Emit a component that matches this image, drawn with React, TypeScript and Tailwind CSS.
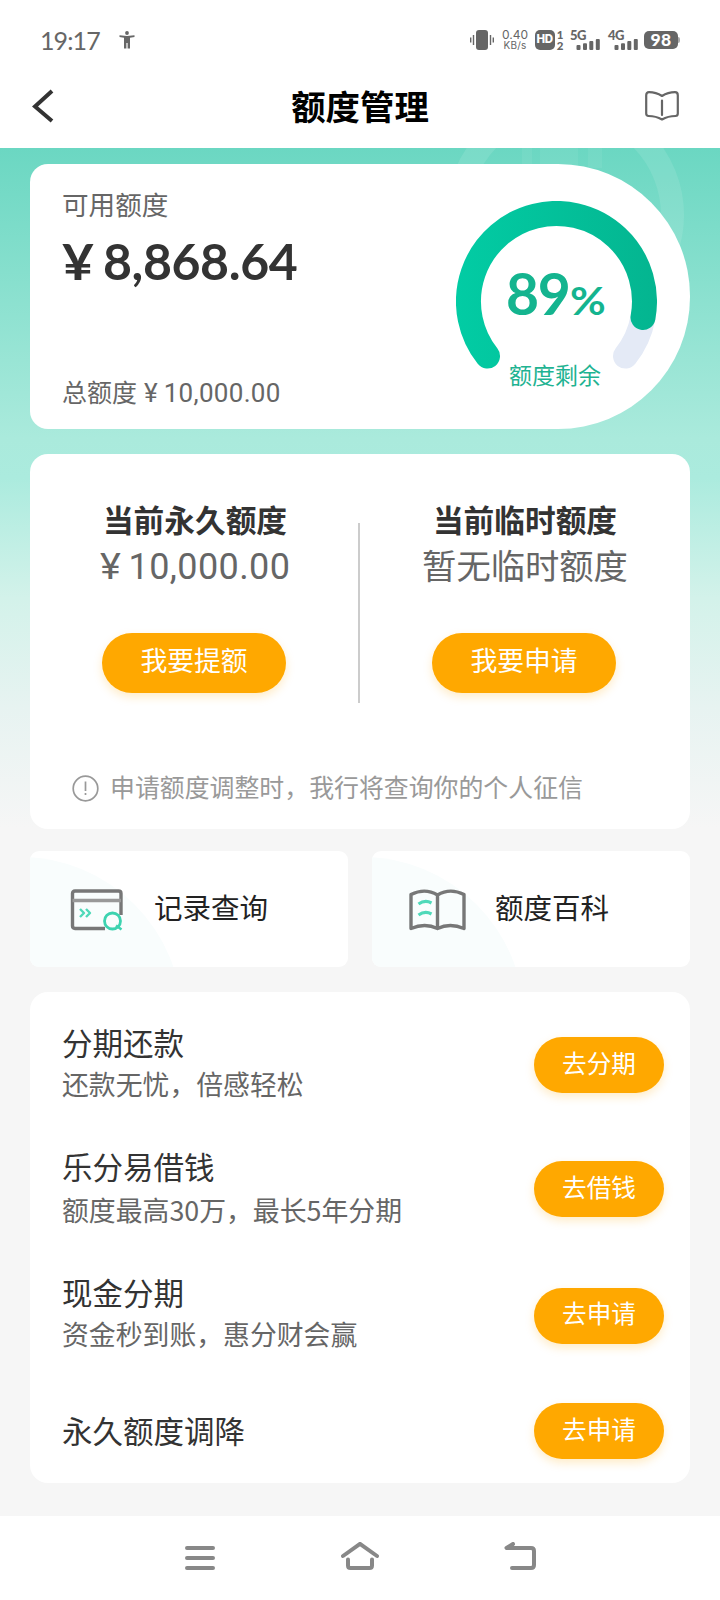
import React from 'react';

interface PlanItem {
  title: string;
  desc?: string;
  action: string;
  rowClass: string;
  textClass: string;
}

const PLANS: PlanItem[] = [
  { title: '分期还款', desc: '还款无忧，倍感轻松', action: '去分期', rowClass: 'h-[124px]', textClass: 'pb-[5px]' },
  { title: '乐分易借钱', desc: '额度最高30万，最长5年分期', action: '去借钱', rowClass: 'h-[124px]', textClass: 'pb-[3px] space-y-[2px]' },
  { title: '现金分期', desc: '资金秒到账，惠分财会赢', action: '去申请', rowClass: 'h-[129px]', textClass: 'pb-[5px]' },
  { title: '永久额度调降', action: '去申请', rowClass: 'h-[102px]', textClass: 'pb-[2px]' },
];

const StatusBar: React.FC = () => (
  <div className="flex h-20 items-center justify-between pl-10 pr-[40px] text-[#666]">
    <div className="flex items-center">
      <span className="w-[61px] whitespace-nowrap font-['Lato','Noto_Sans_CJK_SC',sans-serif] text-[25px] leading-8 tracking-[-0.9px]">19:17</span>
      <svg className="ml-[18px]" width="16" height="18" viewBox="0 0 16 18" fill="#666">
        <circle cx="8" cy="2" r="1.9" />
        <path d="M.5 4.2 8 5l7.5-.8v1.7L11 6.8V17.5H8.600V12H7.400V17.5H5V6.8L.5 5.9z" />
      </svg>
    </div>
    <div className="flex items-center">
      <svg width="24" height="20" viewBox="0 0 24 20" fill="#666">
        <rect x="6" y="0" width="12" height="20" rx="3" />
        <path d="M3.5 5v10M.7 7.5v5M20.5 5v10M23.3 7.5v5" stroke="#666" strokeWidth="1.400" />
      </svg>
      <div className="ml-2 flex w-[27px] flex-col items-center font-['Inter',sans-serif] text-[12px] leading-[11px]">
        <span>0.40</span>
        <span className="text-[10px] tracking-[0.2px]">KB/s</span>
      </div>
      <div className="ml-[6px] flex h-5 w-[20px] items-center justify-center rounded-[5px] bg-[#666] font-['Inter',sans-serif] text-[11.5px] font-extrabold tracking-[-0.4px] text-white">HD</div>
      <div className="ml-[1.500px] flex w-[8px] flex-col items-center font-['Lato',sans-serif] text-[11.5px] font-black leading-[11px]">
        <span>1</span>
        <span>2</span>
      </div>
      <Signal label="5G" className="ml-[6px]" />
      <Signal label="4G" className="ml-[8px]" />
      <div className="ml-[6px] flex items-center">
        <span className="flex h-[18px] w-[34px] items-center justify-center rounded-[5px] bg-[#666] font-['Lato',sans-serif] text-[17.5px] font-black leading-none tracking-[0.3px] text-white">98</span>
        <span className="h-[6px] w-[2px] rounded-r bg-[#aaa]" />
      </div>
    </div>
  </div>
);

const Signal: React.FC<{ label: string; className: string }> = ({ label, className }) => (
  <div className={`relative h-5 w-[30px] ${className}`}>
    <span className="absolute -top-px left-0 font-['Lato',sans-serif] text-[13px] font-black leading-3 tracking-[-0.5px]">{label}</span>
    <svg className="absolute inset-0" width="30" height="20" viewBox="0 0 30 20" fill="#666">
      <rect x="6.500" y="15" width="4" height="5" rx="1" />
      <rect x="13" y="13.200" width="4" height="6.800" rx="1" />
      <rect x="19.300" y="11" width="4" height="9" rx="1" />
      <rect x="25.800" y="9" width="4" height="11" rx="1" />
    </svg>
  </div>
);

const Header: React.FC = () => (
  <div className="flex h-[68px] items-center justify-between pb-[16px] pl-8 pr-[41px]">
    <svg width="22" height="34" viewBox="0 0 22 34" fill="none" stroke="#333" strokeWidth="4">
      <path d="M20 2 3 17.5 20 32" />
    </svg>
    <h1 className="pb-[2px] pl-[21px] text-[34.4px] font-bold leading-10 text-black">额度管理</h1>
    <svg width="34" height="30" viewBox="0 0 34 30" fill="none" stroke="#666" strokeWidth="2.200" strokeLinejoin="round" strokeLinecap="round">
      <path d="M1.2 4.2Q1.2 1.200 4 1.200 11 1.200 17 5 23 1.200 30 1.200 32.8 1.200 32.8 4.200V22.500Q32.8 25 30.500 25 23 25 17 28.500 11 25 3.500 25 1.200 25 1.200 22.500zM17 9.500V24" />
    </svg>
  </div>
);

const Gauge: React.FC = () => (
  <div className="relative h-[201px] w-[201px]">
    <svg width="201" height="201" viewBox="-100.5 -100.5 201 201" fill="none" strokeWidth="25" strokeLinecap="round">
      <defs>
        <linearGradient id="gauge" x1="-100" y1="0" x2="100" y2="0" gradientUnits="userSpaceOnUse">
          <stop offset="0" stopColor="#02cca4" />
          <stop offset="1" stopColor="#04b590" />
        </linearGradient>
      </defs>
      <path d="M86.500 16A88 88 0 0 1 69 54.600" stroke="#e4eaf6" />
      <path d="M-69 54.600A88 88 0 1 1 86.500 16" stroke="url(#gauge)" />
    </svg>
    <div className="absolute left-[50px] top-[62px] flex items-baseline font-['Lato',sans-serif] font-bold leading-[60px] text-[#14b48f]">
      <span className="text-[57px] tracking-[-1.2px]">89</span>
      <span className="origin-left scale-x-[1.12] text-[39px]">%</span>
    </div>
    <p className="absolute inset-x-0 top-[157px] pr-[3px] text-center text-[23px] leading-8 text-[#1fb392]">额度剩余</p>
  </div>
);

const SummaryCard: React.FC = () => (
  <section className="flex h-[265.5px] justify-between rounded-l-[18px] rounded-r-[132px] bg-white pl-8 pr-[33px] pt-[24px]">
    <div className="flex flex-col whitespace-nowrap">
      <p className="text-[26.6px] leading-8 text-[#666]">可用额度</p>
      <p className="mt-[16px] flex items-baseline font-['Lato','Noto_Sans_CJK_SC',sans-serif] text-[50px] font-bold leading-[50px] text-[#333]">
        <span className="origin-left scale-x-110">¥</span>
        <span className="ml-3 tracking-[-0.4px]">8,868.64</span>
      </p>
      <p className="mt-[89.5px] flex items-baseline text-[25px] leading-8 text-[#666]">
        总额度
        <span className="ml-[7px] font-['Roboto',sans-serif] text-[26px]">¥</span>
        <span className="ml-[6px] font-['Roboto',sans-serif] text-[26px] tracking-[0.3px]">10,000.00</span>
      </p>
    </div>
    <div className="pt-[13px]">
      <Gauge />
    </div>
  </section>
);

const LimitColumn: React.FC<{ title: string; action: string; children: React.ReactNode }> = ({ title, action, children }) => (
  <div className="flex flex-1 flex-col items-center">
    <h2 className="pl-[2px] text-[30.7px] font-bold leading-10 text-[#333]">{title}</h2>
    <p className="mt-[6px] flex h-10 whitespace-nowrap pl-[2px] text-[#666]">{children}</p>
    <button className="mt-[48.5px] h-[60px] w-[184px] rounded-full bg-[#ffa800] pb-[7px] text-[26.8px] leading-[53px] text-white shadow-[0_4px_10px_rgba(255,168,0,0.22)]">
      {action}
    </button>
  </div>
);

const LimitCard: React.FC = () => (
  <section className="mt-[24.5px] h-[375px] rounded-[18px] bg-white pt-[45px]">
    <div className="flex pr-[2px]">
      <LimitColumn title="当前永久额度" action="我要提额">
        <span className="origin-left scale-x-110 pt-[2px] font-['Roboto',sans-serif] text-[36px] leading-10">¥</span>
        <span className="ml-[10px] pt-[2px] font-['Roboto',sans-serif] text-[36px] leading-10 tracking-[0.4px]">10,000.00</span>
      </LimitColumn>
      <div className="mt-[24px] h-[180px] w-[2px] bg-[#ccc]" />
      <LimitColumn title="当前临时额度" action="我要申请">
        <span className="-mt-px text-[34.3px] leading-10">暂无临时额度</span>
      </LimitColumn>
    </div>
    <div className="mt-[67px] flex items-center pl-[42px] text-[#999]">
      <svg width="27" height="27" viewBox="0 0 27 27" fill="none" stroke="#999" strokeWidth="1.700">
        <circle cx="13.500" cy="13.500" r="12.300" />
        <path d="M13.500 6.500v9.500M13.500 18v2" />
      </svg>
      <span className="ml-[11px] pb-1.5 text-[24.9px] leading-8">申请额度调整时，我行将查询你的个人征信</span>
    </div>
  </section>
);

const TileGlow: React.FC = () => (
  <svg className="absolute inset-0" width="318" height="116" viewBox="0 0 318 116">
    <circle cx="-10" cy="168" r="162" fill="#f9fdfd" />
  </svg>
);

const Tiles: React.FC = () => (
  <div className="mt-[22px] flex gap-6 text-[28.5px] text-[#222]">
    <div className="relative flex h-[116px] w-[318px] items-center overflow-hidden rounded-[9px] bg-white pl-10">
      <TileGlow />
      <svg className="relative mt-[2px]" width="54" height="42" viewBox="0 0 54 42" fill="none" stroke="#777" strokeWidth="3.400" strokeLinejoin="round">
        <path d="M35 39.500H5Q2.500 39.500 2.500 37V4.500Q2.500 2 5 2H48.500Q51 2 51 4.500V26" />
        <path d="M2.500 11.500H51" stroke="#999" />
        <path d="m10 20 4 4-4 4M16 20l4 4-4 4" stroke="#4fd9b9" strokeWidth="2.400" />
        <circle cx="42.500" cy="32" r="8" stroke="#3dd3b0" strokeWidth="2.800" />
        <path d="m46 36.500 5.500 4" stroke="#3dd3b0" strokeWidth="2.500" />
      </svg>
      <span className="relative ml-[30px] pb-[3px]">记录查询</span>
    </div>
    <div className="relative flex h-[116px] w-[318px] items-center overflow-hidden rounded-[9px] bg-white pl-[37px]">
      <TileGlow />
      <svg className="relative mt-[2px]" width="57" height="42" viewBox="0 0 57 42" fill="none" stroke="#777" strokeWidth="3.400" strokeLinejoin="round">
        <path d="M28.500 6Q16-1.500 2 5.500V39.500Q16 33.500 28.500 39.500 41 33.500 55 39.500V5.500Q41-1.500 28.500 6V39" />
        <path d="M9.500 15Q16 10.500 22.500 14M9.500 26Q16 21.500 22.500 25" stroke="#4fd9b9" strokeWidth="3.200" />
      </svg>
      <span className="relative ml-[29px] pb-[3px]">额度百科</span>
    </div>
  </div>
);

const PlanList: React.FC = () => (
  <section className="mt-[25px] h-[491px] rounded-[18px] bg-white pl-8 pr-[26px] pt-[11.5px]">
    {PLANS.map((item) => (
      <div key={item.title} className={`flex items-center justify-between ${item.rowClass}`}>
        <div className={`whitespace-nowrap ${item.textClass}`}>
          <p className="text-[30.5px] leading-[42px] text-[#333]">{item.title}</p>
          {item.desc && <p className="text-[26.85px] leading-[42px] text-[#666]">{item.desc}</p>}
        </div>
        <button className="h-14 w-[130px] rounded-full bg-[#ffa800] pb-1.5 text-[24.6px] leading-[49px] text-white shadow-[0_4px_10px_rgba(255,168,0,0.22)]">
          {item.action}
        </button>
      </div>
    ))}
  </section>
);

const NavBar: React.FC = () => (
  <nav className="flex h-[84px] items-center justify-between bg-white pl-[184px] pr-[182px]">
    <svg width="32" height="32" viewBox="0 0 32 32" stroke="#888" strokeWidth="4" strokeLinecap="round">
      <path d="M3 6h26M3 16h26M3 26h26" />
    </svg>
    <svg width="40" height="32" viewBox="0 0 40 32" fill="none" stroke="#888" strokeWidth="4" strokeLinecap="round" strokeLinejoin="round">
      <path d="M3 14 20 1.800 37 14" />
      <path d="M8 17.500V23.500Q8 26 10.500 26H29.500Q32 26 32 23.500V17.500" />
    </svg>
    <svg width="34" height="32" viewBox="0 0 34 32" fill="none" stroke="#888" strokeWidth="4" strokeLinecap="round" strokeLinejoin="round">
      <path d="M9 2 2.500 6H27Q30 6 30 9V23Q30 26 27 26H8" />
    </svg>
  </nav>
);

const App: React.FC = () => {
  return (
    <div className="h-[1600px] w-[720px] overflow-hidden bg-white font-['Noto_Sans_CJK_SC',sans-serif]">
      <StatusBar />
      <Header />
      <main className="relative h-[1368px] bg-[#f6f6f6] bg-linear-[180deg,#6bd7c2_0px,#aaeadc_290px,#abebde_330px,#d3f2ea_450px,#e7f3f1_560px,#f6f6f6_680px] px-[30px] pt-[15.500px]">
        <svg className="absolute left-[430px] top-0" width="290" height="200" viewBox="430 148 290 200" fill="none">
          <circle cx="565" cy="215" r="107.500" stroke="#fff" strokeOpacity=".1" strokeWidth="23" />
          <path d="M522 148h10v20h-10zM540 148h38v20h-38zM588 148h14v20h-14z" fill="#fff" fillOpacity=".06" />
        </svg>
        <div className="relative">
          <SummaryCard />
          <LimitCard />
          <Tiles />
          <PlanList />
        </div>
      </main>
      <NavBar />
    </div>
  );
};

export default App;
